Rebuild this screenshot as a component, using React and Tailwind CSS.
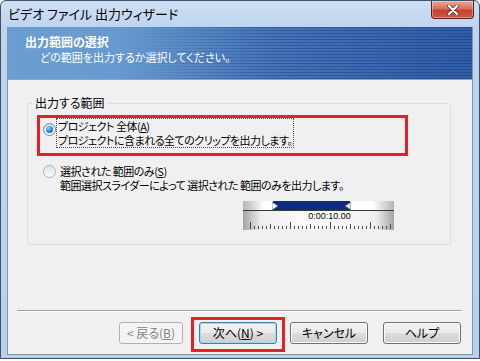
import React from "react";

const jp = "font-['Noto_Sans_CJK_JP','Noto_Sans',sans-serif] [font-feature-settings:'palt']";

const Radio = ({ checked }) => (
  <span
    className={`flex items-center justify-center w-[13px] h-[13px] rounded-full border shrink-0 ${
      checked
        ? "border-[#7c8792] bg-[linear-gradient(180deg,#d9dde1,#f7f7f7)]"
        : "border-[#aeb3b8] bg-[linear-gradient(180deg,#e0e3e6,#fbfbfb)]"
    }`}
  >
    {checked && (
      <span className="w-[7px] h-[7px] rounded-full bg-[radial-gradient(circle_at_35%_30%,#8ad8ff_0%,#2a93dc_45%,#0b4a96_100%)]" />
    )}
  </span>
);

const Button = ({ children, variant }) => {
  let cls =
    "border-[#707070] text-black bg-[linear-gradient(180deg,#f2f2f2_0%,#ebebeb_50%,#dddddd_50%,#cfcfcf_100%)] shadow-[inset_0_0_0_1px_#fbfbfb]";
  if (variant === "disabled")
    cls = "border-[#adb2b5] text-[#838383] bg-[#f4f4f4]";
  if (variant === "default")
    cls =
      "border-[#3c7fb1] text-black bg-[linear-gradient(180deg,#f2f2f2_0%,#ebebeb_50%,#dddddd_50%,#cfcfcf_100%)] shadow-[inset_0_0_0_1px_#9ed9f7]";
  return (
    <div
      className={`h-[22px] flex items-center justify-center rounded-[3px] border text-[12px] leading-none ${cls}`}
    >
      {children}
    </div>
  );
};

const ticks = Array.from({ length: 36 }, (_, i) => i);

const RangeSlider = () => (
  <div className="ml-[215px] w-[151px] flex flex-col">
    {/* track */}
    <div className="h-[10px] flex border-b border-[#3a3a3a] bg-[linear-gradient(90deg,#b4b4b4_0%,#ffffff_14%,#ffffff_86%,#b4b4b4_100%)]">
      <div className="w-[30px]" />
      <div className="relative w-[77px] bg-[#0f2a7e]">
        <svg className="absolute left-[-1px] top-[1px]" width="6" height="8" viewBox="0 0 6 8">
          <path d="M0 0 L6 4 L0 8 Z" fill="#ffffff" stroke="#6a6a6a" strokeWidth="0.8" />
        </svg>
        <svg className="absolute right-[-1px] top-[1px]" width="6" height="8" viewBox="0 0 6 8">
          <path d="M6 0 L0 4 L6 8 Z" fill="#e8e8e8" stroke="#6a6a6a" strokeWidth="0.8" />
        </svg>
      </div>
    </div>
    {/* ruler */}
    <div className="h-[19px] flex flex-col bg-[linear-gradient(90deg,#a4a4a4_0%,#efefef_12%,#ffffff_50%,#efefef_88%,#a4a4a4_100%)]">
      <div className="h-[10px] pl-[22px] flex items-center justify-center text-[9px] leading-none text-black font-['Liberation_Sans',sans-serif]">
        0:00:10.00
      </div>
      <svg width="151" height="9" viewBox="0 0 151 9">
        {ticks.map((i) => {
          const x = 7 + i * 4 + 0.5;
          const h = i % 10 === 0 ? 7 : i % 5 === 0 ? 5 : 3;
          return <line key={i} x1={x} x2={x} y1={8 - h} y2={8} stroke="#4a4a4a" strokeWidth="1" />;
        })}
      </svg>
    </div>
  </div>
);

export default function App() {
  return (
    <div className={`w-[480px] h-[361px] overflow-hidden bg-white ${jp}`}>
      <div className="w-[480px] h-[359px] flex flex-col rounded-t-[6px] border border-[#3e5166] bg-[linear-gradient(180deg,#cde0f4_0px,#bed5ee_26px,#b9d1eb_100%)]">
        {/* title bar */}
        <div className="h-[26px] flex items-start justify-between">
          <div className="pl-[7px] pt-[5px] text-[13px] leading-[15px] text-black">
            ビデオ ファイル 出力ウィザード
          </div>
          <div className="mr-[5px] w-[43px] h-[18px] flex items-center justify-center rounded-b-[4px] border border-t-0 border-[#5a1f1a] bg-[linear-gradient(180deg,#e9a896_0%,#d9705f_45%,#c4402f_55%,#c85a44_100%)] shadow-[inset_0_0_0_1px_rgba(255,255,255,0.35)]">
            <svg width="12" height="10" viewBox="0 0 12 10">
              <path d="M2 1 L10 9 M10 1 L2 9" stroke="#5a2a22" strokeWidth="3.6" strokeLinecap="round" />
              <path d="M2 1 L10 9 M10 1 L2 9" stroke="#ffffff" strokeWidth="2.2" strokeLinecap="round" />
            </svg>
          </div>
        </div>

        {/* client area */}
        <div className="mx-[6px] flex-1 mb-[3px] flex flex-col border border-t-0 border-[#8296ab] bg-[#f0f0f0]">
          {/* header */}
          <div className="relative h-[53px] border-b border-[#9aa3ad] bg-[linear-gradient(90deg,#6c9fd1_0%,#6699cd_25%,#4675b9_55%,#2f5da6_100%)]">
            <div className="absolute inset-0 bg-[repeating-linear-gradient(180deg,rgba(18,44,110,0.35)_0px,rgba(18,44,110,0.35)_1px,transparent_1px,transparent_3px)] [mask-image:linear-gradient(90deg,transparent_25%,black_60%)]" />
            <div className="relative pl-[17px] pt-[8px] text-[12px] leading-[14px] font-bold text-white">
              出力範囲の選択
            </div>
            <div className="relative pl-[32px] pt-[1px] text-[11px] leading-[15px] text-white">
              どの範囲を出力するか選択してください。
            </div>
          </div>

          {/* body */}
          <div className="flex-1 flex flex-col">
            <fieldset className="mt-[16px] ml-[19px] mr-[21px] pb-[14px] border border-[#d5dfe5] rounded-[3px] text-[12px] text-black">
              <legend className="ml-[4px] px-[3px] leading-[14px]">出力する範囲</legend>

              {/* annotated first option */}
              <div className="mt-[5px] ml-[9px] w-[371px] h-[41px] border-[3px] border-[#e5202b] flex items-start pl-[3px]">
                <div className="mt-[5px]">
                  <Radio checked />
                </div>
                <div className="mt-[0px] border border-dotted border-[#4a4a4a] px-[1px] text-[11px] leading-[14px] tracking-[-0.5px]">
                  <div>
                    プロジェクト 全体(<span className="underline">A</span>)
                  </div>
                  <div>プロジェクトに含まれる全てのクリップを出力します。</div>
                </div>
              </div>

              <div className="mt-[8px] ml-[15px] flex items-start gap-[4px]">
                <div className="mt-[1px]">
                  <Radio />
                </div>
                <div className="text-[11px] leading-[14px] tracking-[-0.5px]">
                  <div>
                    選択された 範囲のみ(<span className="underline">S</span>)
                  </div>
                  <div>範囲選択スライダーによって 選択された 範囲のみを出力します。</div>
                </div>
              </div>

              <div className="mt-[9px]">
                <RangeSlider />
              </div>
            </fieldset>

            <div className="flex-1" />

            <div className="mx-[9px] mr-[10px] border-t border-[#a0a0a0] border-b border-b-white" />

            <div className="mt-[10px] mb-[10px] pl-[111px] flex items-center">
              <div className="w-[64px]">
                <Button variant="disabled">
                  &lt; 戻る(<span className="underline">B</span>)
                </Button>
              </div>
              <div className="relative ml-[16px] w-[78px]">
                <Button variant="default">
                  次へ(<span className="underline">N</span>) &gt;
                </Button>
                <div className="absolute -left-[8px] -right-[8px] -top-[5px] -bottom-[8px] border-[3px] border-[#e5202b]" />
              </div>
              <div className="ml-[13px] w-[78px]">
                <Button>キャンセル</Button>
              </div>
              <div className="ml-[15px] w-[78px]">
                <Button>ヘルプ</Button>
              </div>
            </div>
          </div>
        </div>
      </div>
    </div>
  );
}
